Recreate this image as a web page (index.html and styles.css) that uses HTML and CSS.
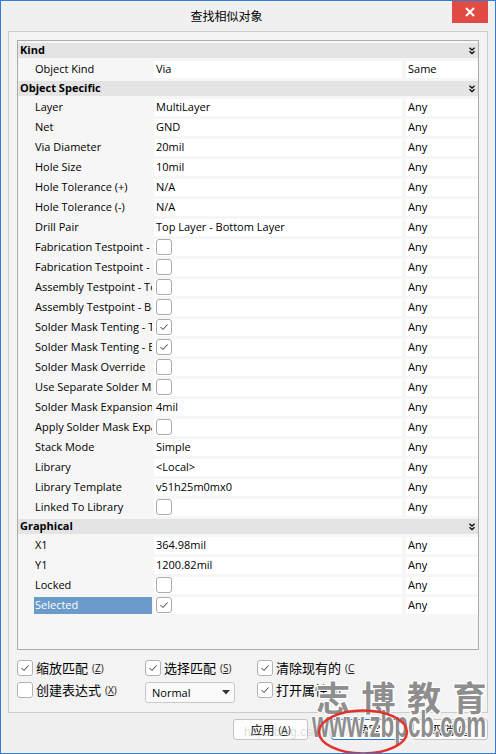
FILE: index.html
```html
<!DOCTYPE html>
<html>
<head>
<meta charset="utf-8">
<link rel="stylesheet" href="styles.css">
</head>
<body>
<div class="window">
  <div class="titlebar">
    <div class="title">查找相似对象</div>
    <div class="close"><svg width="10" height="10" viewBox="0 0 10 10"><path d="M1 1L9 9M9 1L1 9" stroke="#fff" stroke-width="2"/></svg></div>
  </div>
  <div class="group">
    <div class="grid">
      <div class="hdr"><span>Kind</span><svg class="chev" width="6" height="8" viewBox="0 0 6 8"><path d="M0.5 0.8L3 3.2L5.5 0.8M0.5 4.3L3 6.7L5.5 4.3" fill="none" stroke="#000" stroke-width="1.3"/></svg></div>
      <div class="row"><div class="name">Object Kind</div><div class="val">Via</div><div class="any">Same</div></div>
      <div class="hdr"><span>Object Specific</span><svg class="chev" width="6" height="8" viewBox="0 0 6 8"><path d="M0.5 0.8L3 3.2L5.5 0.8M0.5 4.3L3 6.7L5.5 4.3" fill="none" stroke="#000" stroke-width="1.3"/></svg></div>
      <div class="row"><div class="name">Layer</div><div class="val">MultiLayer</div><div class="any">Any</div></div>
      <div class="row"><div class="name">Net</div><div class="val">GND</div><div class="any">Any</div></div>
      <div class="row"><div class="name">Via Diameter</div><div class="val">20mil</div><div class="any">Any</div></div>
      <div class="row"><div class="name">Hole Size</div><div class="val">10mil</div><div class="any">Any</div></div>
      <div class="row"><div class="name">Hole Tolerance (+)</div><div class="val">N/A</div><div class="any">Any</div></div>
      <div class="row"><div class="name">Hole Tolerance (-)</div><div class="val">N/A</div><div class="any">Any</div></div>
      <div class="row"><div class="name">Drill Pair</div><div class="val">Top Layer - Bottom Layer</div><div class="any">Any</div></div>
      <div class="row"><div class="name">Fabrication Testpoint - Top</div><div class="val"><span class="cb"></span></div><div class="any">Any</div></div>
      <div class="row"><div class="name">Fabrication Testpoint - Bottom</div><div class="val"><span class="cb"></span></div><div class="any">Any</div></div>
      <div class="row"><div class="name">Assembly Testpoint - Top</div><div class="val"><span class="cb"></span></div><div class="any">Any</div></div>
      <div class="row"><div class="name">Assembly Testpoint - Bottom</div><div class="val"><span class="cb"></span></div><div class="any">Any</div></div>
      <div class="row"><div class="name">Solder Mask Tenting - Top</div><div class="val"><span class="cb"><svg width="14" height="14" viewBox="0 0 14 14"><path d="M3.5 7L6 9.5L10.5 4.5" fill="none" stroke="#333" stroke-width="1"/></svg></span></div><div class="any">Any</div></div>
      <div class="row"><div class="name">Solder Mask Tenting - Bottom</div><div class="val"><span class="cb"><svg width="14" height="14" viewBox="0 0 14 14"><path d="M3.5 7L6 9.5L10.5 4.5" fill="none" stroke="#333" stroke-width="1"/></svg></span></div><div class="any">Any</div></div>
      <div class="row"><div class="name">Solder Mask Override</div><div class="val"><span class="cb"></span></div><div class="any">Any</div></div>
      <div class="row"><div class="name">Use Separate Solder Mask Expansion</div><div class="val"><span class="cb"></span></div><div class="any">Any</div></div>
      <div class="row"><div class="name">Solder Mask Expansion</div><div class="val">4mil</div><div class="any">Any</div></div>
      <div class="row"><div class="name">Apply Solder Mask Expansion</div><div class="val"><span class="cb"></span></div><div class="any">Any</div></div>
      <div class="row"><div class="name">Stack Mode</div><div class="val">Simple</div><div class="any">Any</div></div>
      <div class="row"><div class="name">Library</div><div class="val">&lt;Local&gt;</div><div class="any">Any</div></div>
      <div class="row"><div class="name">Library Template</div><div class="val">v51h25m0mx0</div><div class="any">Any</div></div>
      <div class="row"><div class="name">Linked To Library</div><div class="val"><span class="cb"></span></div><div class="any">Any</div></div>
      <div class="hdr"><span>Graphical</span><svg class="chev" width="6" height="8" viewBox="0 0 6 8"><path d="M0.5 0.8L3 3.2L5.5 0.8M0.5 4.3L3 6.7L5.5 4.3" fill="none" stroke="#000" stroke-width="1.3"/></svg></div>
      <div class="row"><div class="name">X1</div><div class="val">364.98mil</div><div class="any">Any</div></div>
      <div class="row"><div class="name">Y1</div><div class="val">1200.82mil</div><div class="any">Any</div></div>
      <div class="row"><div class="name">Locked</div><div class="val"><span class="cb"></span></div><div class="any">Any</div></div>
      <div class="row sel"><div class="name">Selected</div><div class="val"><span class="cb"><svg width="14" height="14" viewBox="0 0 14 14"><path d="M3.5 7L6 9.5L10.5 4.5" fill="none" stroke="#333" stroke-width="1"/></svg></span></div><div class="any">Any</div></div>
    </div>
    <div class="opts">
      <div class="opt"><span class="cb"><svg width="14" height="14" viewBox="0 0 14 14"><path d="M3.5 7L6 9.5L10.5 4.5" fill="none" stroke="#333" stroke-width="1"/></svg></span><span>缩放匹配</span><span class="key">(<u>Z</u>)</span></div>
      <div class="opt"><span class="cb"><svg width="14" height="14" viewBox="0 0 14 14"><path d="M3.5 7L6 9.5L10.5 4.5" fill="none" stroke="#333" stroke-width="1"/></svg></span><span>选择匹配</span><span class="key">(<u>S</u>)</span></div>
      <div class="opt clip"><span class="cb"><svg width="14" height="14" viewBox="0 0 14 14"><path d="M3.5 7L6 9.5L10.5 4.5" fill="none" stroke="#333" stroke-width="1"/></svg></span><span>清除现有的</span><span class="key">(<u>C</u>)</span></div>
      <div class="opt"><span class="cb"></span><span>创建表达式</span><span class="key">(<u>X</u>)</span></div>
      <div class="select"><span>Normal</span><svg width="8" height="5" viewBox="0 0 8 5"><path d="M0 0H8L4 4.5Z" fill="#333"/></svg></div>
      <div class="opt clip"><span class="cb"><svg width="14" height="14" viewBox="0 0 14 14"><path d="M3.5 7L6 9.5L10.5 4.5" fill="none" stroke="#333" stroke-width="1"/></svg></span><span>打开属性</span><span class="key">(<u>I</u>)</span></div>
    </div>
  </div>
  <div class="buttons">
    <div class="btn b1"><span>应用</span><span class="key">(<u>A</u>)</span></div>
    <div class="btn b2 default"><span>确定</span></div>
    <div class="btn b3"><span>取消</span><span class="key">(<u>C</u>)</span></div>
  </div>
  <div class="wm-faint">http://blog.csdn.net/</div>
  <div class="wm1">志博教育</div>
  <div class="wm2">www.zbpcb.com</div>
  <svg class="ring" width="92" height="46" viewBox="0 0 92 46"><ellipse cx="46" cy="23" rx="44" ry="21.5" fill="none" stroke="#e3302b" stroke-width="2.4"/></svg>
</div>
</body>
</html>
```

FILE: styles.css
```css
* { box-sizing: border-box; }
body {
  margin: 0;
  font-family: "Open Sans", "Noto Sans CJK SC", sans-serif;
  font-size: 11px;
  color: #000;
}
.window {
  position: relative;
  width: 496px;
  height: 754px;
  border: 1px solid #2f80d4;
  background: #f0f0f0;
  overflow: hidden;
}
.titlebar {
  height: 30px;
  display: flex;
  align-items: flex-start;
}
.title {
  flex: 1;
  text-align: center;
  font-family: "Noto Sans CJK SC", sans-serif;
  font-size: 12px;
  line-height: 30px;
  color: #000;
}
.close {
  width: 36px;
  height: 23px;
  margin-top: -1px;
  margin-right: 7px;
  background: #e04b43;
  display: flex;
  align-items: center;
  justify-content: center;
}
.group {
  margin: 0 7px;
  height: 682px;
  border: 1px solid #cbcbcb;
  background: #f3f3f3;
  padding: 8px 8px 0 8px;
}
.grid {
  height: 610px;
  border: 1px solid #ababab;
  background: #f6f6f6;
  padding-top: 2px;
  display: flex;
  flex-direction: column;
  gap: 3px;
}
.hdr {
  height: 15px;
  flex: none;
  background: #e4e4e4;
  display: flex;
  align-items: center;
  justify-content: space-between;
  padding: 0 3px 1px 2px;
  font-weight: 700;
  line-height: 14px;
}
.chev { display: block; margin-top: 1px; }
.row {
  height: 17px;
  flex: none;
  display: flex;
  line-height: 16px;
  padding-left: 16px;
}
.name {
  width: 118px;
  padding-left: 1px;
  white-space: nowrap;
  overflow: hidden;
}
.val {
  width: 248px;
  margin-left: 2px;
  background: #fff;
  padding-left: 2px;
  white-space: nowrap;
}
.any {
  flex: 1;
  margin-left: 4px;
  background: #fff;
  padding-left: 2px;
}
.sel .name {
  background: #6a9bcb;
  color: #fff;
}
.cb {
  display: flex;
  align-items: center;
  justify-content: center;
  width: 16px;
  height: 16px;
  border: 1px solid #ababab;
  border-radius: 3px;
  background: #fff;
  flex: none;
}
.opts {
  display: grid;
  grid-template-columns: 128px 112px 98px;
  row-gap: 6px;
  margin-top: 10px;
  align-items: start;
}
.opt {
  display: flex;
  align-items: center;
  height: 16px;
  white-space: nowrap;
  font-family: "Noto Sans CJK SC", sans-serif;
  font-size: 13px;
  line-height: 16px;
}
.opt .cb { margin-right: 3px; border-color: #b2b2b2; }
.opt.clip { overflow: hidden; }
.key {
  font-family: "Open Sans", sans-serif;
  font-size: 10px;
  margin-left: 4px;
  color: #222;
}
.select {
  width: 90px;
  height: 21px;
  border: 1px solid #c8c8c8;
  border-radius: 3px;
  background: #fafafa;
  display: flex;
  align-items: center;
  justify-content: space-between;
  padding: 0 4px 0 6px;
  font-size: 11px;
}
.buttons {
  display: flex;
  justify-content: flex-end;
  padding: 6px 7px 0 0;
}
.btn {
  width: 75px;
  height: 21px;
  border: 1px solid #c4c4c4;
  border-radius: 3px;
  background: #fdfdfd;
  display: flex;
  align-items: center;
  justify-content: center;
  font-family: "Noto Sans CJK SC", sans-serif;
  font-size: 12px;
}
.b1 { margin-right: 23px; }
.b2 { margin-right: 7px; }
.default { border-color: #2a7ad5; }
.wm-faint {
  position: absolute;
  left: 243px;
  top: 724px;
  font-size: 12px;
  color: rgba(160, 160, 160, 0.35);
  font-family: "Liberation Sans", sans-serif;
}
.wm1 {
  position: absolute;
  left: 315px;
  top: 679px;
  font-family: "Noto Sans CJK SC", sans-serif;
  font-weight: 700;
  font-size: 34px;
  line-height: 34px;
  letter-spacing: 11.5px;
  color: #8e8e8e;
  white-space: nowrap;
  text-shadow: 1px 0 #fff, -1px 0 #fff, 0 1px #fff, 0 -1px #fff, 1px 1px #fff, -1px -1px #fff, 1px -1px #fff, -1px 1px #fff;
}
.wm2 {
  position: absolute;
  left: 311px;
  top: 706px;
  font-family: "Liberation Sans", sans-serif;
  font-weight: 700;
  font-size: 36px;
  line-height: 36px;
  color: #8e8e8e;
  white-space: nowrap;
  transform: scaleX(0.62);
  transform-origin: 0 0;
  text-shadow: 1px 0 #fff, -1px 0 #fff, 0 1px #fff, 0 -1px #fff, 1px 1px #fff, -1px -1px #fff, 1px -1px #fff, -1px 1px #fff;
}
.ring {
  position: absolute;
  left: 316px;
  top: 708px;
}
```
